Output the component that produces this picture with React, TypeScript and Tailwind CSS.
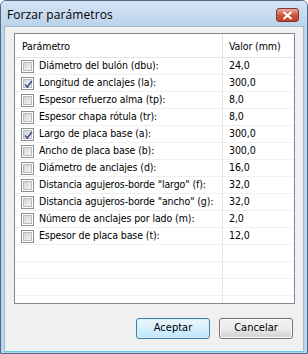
import React from "react";

const rows: { label: string; value: string; checked: boolean }[] = [
  { label: "Diámetro del bulón (dbu):", value: "24,0", checked: false },
  { label: "Longitud de anclajes (la):", value: "300,0", checked: true },
  { label: "Espesor refuerzo alma (tp):", value: "8,0", checked: false },
  { label: "Espesor chapa rótula (tr):", value: "8,0", checked: false },
  { label: "Largo de placa base (a):", value: "300,0", checked: true },
  { label: "Ancho de placa base (b):", value: "300,0", checked: false },
  { label: "Diámetro de anclajes (d):", value: "16,0", checked: false },
  { label: 'Distancia agujeros-borde "largo" (f):', value: "32,0", checked: false },
  { label: 'Distancia agujeros-borde "ancho" (g):', value: "32,0", checked: false },
  { label: "Número de anclajes por lado (m):", value: "2,0", checked: false },
  { label: "Espesor de placa base (t):", value: "12,0", checked: false },
];

function Check({ checked }: { checked: boolean }) {
  return (
    <div className="w-[13px] h-[13px] border border-[#8e8f8f] bg-white p-[1px] shrink-0">
      <div className="w-full h-full bg-gradient-to-br from-[#d2d4d6] to-[#f4f4f4] border border-[#b9bbbd] relative">
        {checked && (
          <svg className="absolute -left-[1px] -top-[1px]" width="11" height="11" viewBox="0 0 11 11">
            <path d="M2 5.5 L4.3 8 L8.8 2" stroke="#3c4f8f" strokeWidth="1.6" fill="none" />
          </svg>
        )}
      </div>
    </div>
  );
}

export default function App() {
  const font = { fontFamily: '"DejaVu Sans Condensed", Tahoma, "Liberation Sans", sans-serif' };
  return (
    <div className="w-[308px] h-[354px] bg-[#bcd4ec] border border-[#4d6a88] rounded-t-[6px] flex flex-col overflow-hidden" style={font}>
      <div className="h-[25px] flex items-start justify-between pl-[6px] pr-[8px] bg-gradient-to-b from-[#d5e4f4] to-[#bcd3eb]">
        <span className="text-[12px] text-black mt-[5px] tracking-[0.1px]" style={{ fontFamily: '"Open Sans", "Liberation Sans", sans-serif' }}>
          Forzar parámetros
        </span>
        <div className="mt-[7px] w-[23px] h-[14px] rounded-[3px] border border-[#7a3a30] bg-gradient-to-b from-[#e9a99c] via-[#d1553f] to-[#c8402a] flex items-center justify-center">
          <svg width="11" height="9" viewBox="0 0 11 9">
            <path d="M1.5 1 L9.5 8 M9.5 1 L1.5 8" stroke="white" strokeWidth="2.2" />
          </svg>
        </div>
      </div>
      <div className="flex-1 mx-[3px] mb-[1px] bg-[#f0f0f0] border border-[#a6bbd2] border-b-[#63c9e8] flex flex-col">
        <div className="mt-[6px] ml-[9px] w-[281px] h-[271px] border border-[#828790] bg-white flex flex-col overflow-hidden text-[10.5px] tracking-[-0.1px] text-black">
          <div className="h-[24px] shrink-0 flex border-b border-[#e5e5e5]">
            <div className="w-[208px] border-r border-[#e5e5e5] pl-[7px] pt-[5px]">Parámetro</div>
            <div className="flex-1 pl-[6px] pt-[5px]">Valor (mm)</div>
          </div>
          {rows.map((r, i) => (
            <div key={i} className="h-[17px] shrink-0 flex border-b border-[#f0f0f0]">
              <div className="w-[208px] border-r border-[#e5e5e5] flex items-center pl-[6px] gap-[5px] whitespace-nowrap overflow-hidden">
                <Check checked={r.checked} />
                <span>{r.label}</span>
              </div>
              <div className="flex-1 pl-[6px] flex items-center">{r.value}</div>
            </div>
          ))}
          {[0, 1, 2, 3].map((i) => (
            <div key={"e" + i} className="h-[17px] shrink-0 flex border-b border-[#f0f0f0]">
              <div className="w-[208px] border-r border-[#e5e5e5]" />
              <div className="flex-1" />
            </div>
          ))}
        </div>
        <div className="flex justify-end gap-[9px] mt-[14px] mr-[10px]">
          <button className="w-[74px] h-[21px] rounded-[3px] border border-[#3c7fb1] bg-gradient-to-b from-[#eaf6fd] via-[#d7effc] to-[#bde6fd] text-[11px] text-black shadow-[inset_0_0_0_1px_#d9f0fc]">
            Aceptar
          </button>
          <button className="w-[74px] h-[21px] rounded-[3px] border border-[#707070] bg-gradient-to-b from-[#f2f2f2] via-[#ebebeb] to-[#cfcfcf] text-[11px] text-black shadow-[inset_0_0_0_1px_#fcfcfc]">
            Cancelar
          </button>
        </div>
      </div>
    </div>
  );
}
